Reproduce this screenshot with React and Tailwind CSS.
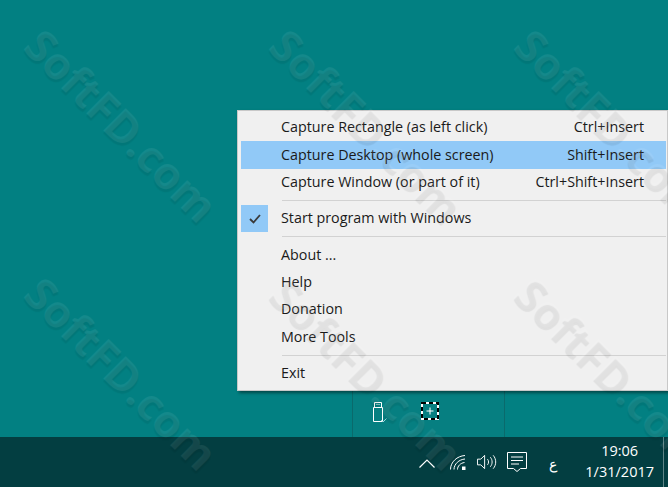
import React from 'react';

const FONT = "font-['Open_Sans','Noto_Sans',sans-serif]";

const WATERMARKS = [
  { id: 1, cls: 'left-[-3px] top-[103px]' },
  { id: 2, cls: 'left-[242px] top-[103px]' },
  { id: 3, cls: 'left-[487px] top-[103px]' },
  { id: 4, cls: 'left-[-3px] top-[351px]' },
  { id: 5, cls: 'left-[242px] top-[351px]' },
  { id: 6, cls: 'left-[487px] top-[351px]' },
];

function Row({ label, shortcut, active }) {
  return (
    <div className={`flex h-[27.5px] items-center pb-[1.500px] pl-[40px] pr-[22px] ${active ? 'bg-[#91c9f7]' : ''}`}>
      <span className="flex-1">{label}</span>
      {shortcut && <span>{shortcut}</span>}
    </div>
  );
}

function Separator() {
  return <div className="my-[4px] ml-[41px] h-px bg-[#d2d2d2]" />;
}

function ContextMenu() {
  return (
    <div className="absolute left-[237px] top-[110px] flex h-[281px] w-[431px] flex-col border border-[#c8c8c8] bg-[#f0f0f0] py-[3px] pl-[3px] pr-px text-[14.3px] text-[#1a1a1a] shadow-[2px_2px_3px_rgba(0,0,0,0.45)]">
      <Row label="Capture Rectangle (as left click)" shortcut="Ctrl+Insert" />
      <Row label="Capture Desktop (whole screen)" shortcut="Shift+Insert" active />
      <Row label="Capture Window (or part of it)" shortcut="Ctrl+Shift+Insert" />
      <Separator />
      <div className="flex h-[27.5px] items-center">
        <div className="flex h-full w-[27px] items-center justify-center bg-[#91c9f7]">
          <svg width="12" height="10" viewBox="0 0 12 10" fill="none" stroke="#3a3a3a" strokeWidth="1.8">
            <path d="M1 5l3.5 3.5L11 1" />
          </svg>
        </div>
        <span className="pb-[1.500px] pl-[13px]">Start program with Windows</span>
      </div>
      <Separator />
      <Row label="About ..." />
      <Row label="Help" />
      <Row label="Donation" />
      <Row label="More Tools" />
      <Separator />
      <Row label="Exit" />
    </div>
  );
}

function TrayFlyout() {
  return (
    <div className="absolute left-[352px] top-[380px] flex h-[57px] w-[153px] items-start gap-[33px] border-x border-[#0a6a6c] bg-[#067f81] pl-[19px] pt-[22px]">
      <svg width="16" height="21" viewBox="0 0 16 21" fill="none" stroke="#fff">
        <path d="M2.500.500h7v5h-7zM1.500 5.500h9v14h-9z" />
        <path d="M4.500 2.500h1M6.500 2.500h1" />
        <path d="M9 18l2 2 3.500-3.500" stroke="#9fd6dc" />
      </svg>
      <svg width="18" height="18" viewBox="0 0 18 18" fill="none">
        <rect x="1" y="1" width="16" height="16" stroke="#fff" strokeWidth="2" />
        <rect x="1" y="1" width="16" height="16" stroke="#000" strokeWidth="2" strokeDasharray="4 3" />
        <path d="M9 5.500v7M5.500 9h7" stroke="#fff" />
      </svg>
    </div>
  );
}

function Taskbar() {
  return (
    <div className="flex h-[50px] items-center bg-[#033e41] text-white">
      <div className="flex flex-1 items-center justify-end pr-[9px]">
        <svg width="16" height="9" viewBox="0 0 16 9" fill="none" stroke="#fff" strokeWidth="1.2" className="mr-[15px] mt-[3px]">
          <path d="M.5 8.500L8 1l7.500 7.500" />
        </svg>
        <svg width="16" height="16" viewBox="0 0 16 16" fill="none" stroke="#fff" className="mr-[11px]">
          <path d="M.5 15.500C.5 8 7 2 15 1.500M4 15.500C4 10 9 5.500 15 5M7.500 15.500c0-3.500 3-6.500 7-7" />
          <path d="M12 12.500h3.500V16H12z" fill="#fff" stroke="none" />
        </svg>
        <svg width="20" height="16" viewBox="0 0 21 16" fill="none" stroke="#fff" className="mr-[10px]">
          <path d="M.5 5h3.500l4-4v14l-4-4H.500z" />
          <path d="M11 5c1.500 1.500 1.500 4.500 0 6M14 3c2.500 3 2.500 7 0 10M17 1c3.500 4 3.500 10 0 14" />
        </svg>
        <svg width="20" height="20" viewBox="0 0 20 20" fill="none" stroke="#fff" className="mr-[22px]">
          <path d="M.5.500h19v16h-6l-3.500 3-3.500-3h-6z" />
          <path d="M4 5h12M4 8.500h12M4 12h8" />
        </svg>
        <span className="mr-[26px] mt-[4px] w-[10px] text-[14px] font-light leading-none">ع</span>
        <div className="flex flex-col items-center pb-[2px] text-[14.500px] leading-[21px]">
          <span>19:06</span>
          <span>1/31/2017</span>
        </div>
      </div>
      <div className="mr-[4px] h-[50px] w-px bg-[#5f8486]" />
    </div>
  );
}

export default function App() {
  return (
    <div className={`relative flex h-[487px] w-[668px] flex-col overflow-hidden bg-[#028082] ${FONT}`}>
      <div className="flex-1" />
      <TrayFlyout />
      <ContextMenu />
      <Taskbar />
      {WATERMARKS.map((w) => (
        <span
          key={w.id}
          className={`pointer-events-none absolute rotate-45 whitespace-nowrap text-[44px] font-bold leading-none text-white/[0.07] [text-shadow:2px_2px_1px_rgba(0,0,0,0.07)] ${w.cls}`}
        >
          SoftFD.com
        </span>
      ))}
    </div>
  );
}
